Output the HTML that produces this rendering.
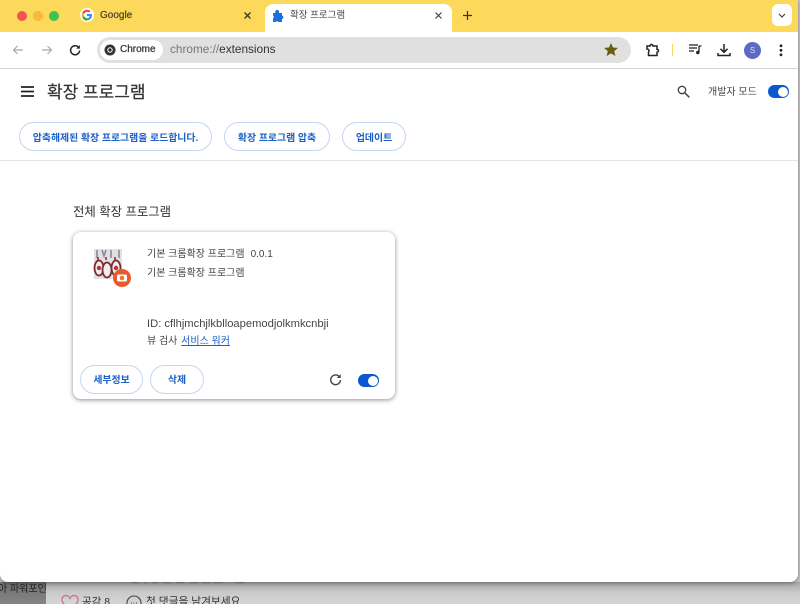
<!DOCTYPE html>
<html lang="ko">
<head>
<meta charset="utf-8">
<style>
*{box-sizing:border-box}
html,body{margin:0;padding:0;width:800px;height:604px;overflow:hidden;background:#c9c9c9;font-family:"Liberation Sans","Noto Sans CJK KR",sans-serif;color:#333}
.abs,.t{position:absolute}
.t{white-space:nowrap;line-height:1}
.wrap{position:absolute;left:0;top:0;width:800px;height:604px;overflow:hidden;filter:blur(.3px)}
.bg{position:absolute;left:0;top:582px;width:800px;height:22px;background:linear-gradient(#a5a5a5,#cbcbcb 50%,#d6d6d6)}
.bgl{position:absolute;left:0;top:582px;width:46px;height:22px;background:linear-gradient(#6f6f6f,#858585)}
.win{position:absolute;left:0;top:0;width:798px;height:582px;background:#fff;border-radius:0 0 8px 8px;overflow:hidden;box-shadow:0 1px 5px rgba(0,0,0,.4)}
.top{position:absolute;left:0;top:0;width:100%;height:32px;background:#fdd95b}
.tab{position:absolute;left:265px;top:4px;width:187px;height:28px;background:#fff;border-radius:8px 8px 0 0}
.bar{position:absolute;left:0;top:32px;width:100%;height:37px;background:#fff;border-bottom:1px solid #d4d4d4}
.omni{position:absolute;left:97px;top:37px;width:534px;height:26px;border-radius:13px;background:#e0e0e0}
.chip{position:absolute;left:100px;top:40px;width:63px;height:20px;border-radius:10px;background:#fff}
.btn{position:absolute;height:29px;border:1px solid #c6d5f2;border-radius:15px;background:#fff;color:#1a5fc8;font-size:9.900px;font-weight:bold;line-height:31px;text-align:center;white-space:nowrap}
.hr{position:absolute;left:0;top:160px;width:100%;height:1px;background:#e4e4e4}
.card{position:absolute;left:73px;top:232px;width:322px;height:167px;background:#fff;border-radius:8px;box-shadow:0 1px 5px rgba(0,0,0,.45)}
.tg{position:absolute;width:21px;height:13px;border-radius:7px;background:#0b57d0}
.tg i{position:absolute;right:1.500px;top:1.500px;width:10px;height:10px;border-radius:50%;background:#fff}
svg{position:absolute;overflow:visible}
</style>
</head>
<body>
<div class="wrap">
<div class="bg"></div><div class="bgl"></div>
<div class="t" style="left:-2px;top:585px;font-size:10px;color:#222">아 파워포인</div>
<div class="t" style="left:82px;top:597px;font-size:10.500px;color:#333">공감 8</div>
<div class="t" style="left:146px;top:597px;font-size:10.700px;color:#333">첫 댓글을 남겨보세요</div>
<svg style="left:61px;top:595px" width="18" height="14" viewBox="0 0 18 14"><path d="M9 14C4 10 1 8 1 5a4 4 0 0 1 8-1 4 4 0 0 1 8 1c0 3-3 5-8 9z" fill="none" stroke="#cf6b7d" stroke-width="1.200"/></svg>
<svg style="left:126px;top:595px" width="16" height="14" viewBox="0 0 16 14"><circle cx="8" cy="8" r="7" fill="none" stroke="#444" stroke-width="1.100"/><path d="M5 8h1M7.500 8h1M10 8h1" stroke="#444"/></svg>
<svg style="left:130px;top:582px" width="114" height="3" viewBox="0 0 114 3"><path d="M2 .7h7M14 .7h3M22 .7h6M33 .7h8M46 .7h8M60 .7h8M72 .7h8M84 .7h9M105 .7h9" stroke="#6f8a72" stroke-width=".9"/></svg>

<div class="win">
 <div class="top"></div>
 <div class="abs" style="left:17px;top:11px;width:10px;height:10px;border-radius:50%;background:#f0564e"></div>
 <div class="abs" style="left:33px;top:11px;width:10px;height:10px;border-radius:50%;background:#f8b93a"></div>
 <div class="abs" style="left:49px;top:11px;width:10px;height:10px;border-radius:50%;background:#3fc24e"></div>

 <!-- Google tab -->
 <div class="abs" style="left:80px;top:8px;width:14px;height:14px;border-radius:50%;background:#fff"></div>
 <svg style="left:81px;top:9px" width="12" height="12" viewBox="0 0 24 24"><path d="M22 12.300c0-.8-.1-1.500-.2-2.200H12v4.200h5.600a4.800 4.800 0 0 1-2.100 3.100v2.600h3.300c2-1.800 3.200-4.500 3.200-7.700z" fill="#4285f4"/><path d="M12 22.500c2.800 0 5.200-.9 6.800-2.500l-3.300-2.600c-.9.600-2.100 1-3.500 1-2.700 0-5-1.800-5.800-4.300H2.800v2.700a10.500 10.500 0 0 0 9.200 6.700z" fill="#34a853"/><path d="M6.200 14.100a6.300 6.300 0 0 1 0-4.200V7.200H2.800a10.500 10.500 0 0 0 0 9.600z" fill="#fbbc05"/><path d="M12 5.600c1.500 0 2.900.5 4 1.500l3-3A10.500 10.500 0 0 0 2.800 7.200l3.400 2.700C7 7.400 9.300 5.600 12 5.600z" fill="#ea4335"/></svg>
 <div class="t" style="left:100px;top:11px;font-size:10px;color:#4a4020;-webkit-text-stroke:.2px #4a4020">Google</div>
 <svg style="left:243px;top:11px" width="9" height="9" viewBox="0 0 9 9"><path d="M1.500 1.500l6 6M7.500 1.500l-6 6" stroke="#3b3720" stroke-width="1.300"/></svg>

 <!-- Active tab -->
 <div class="tab"></div>
 <svg style="left:272px;top:9px" width="13" height="13" viewBox="0 0 13 13"><path d="M1 4h2.500a2 2 0 0 1 3.500-2V4h3v2.500a1.800 1.800 0 0 1 0 3.500V13H6.500a1.800 1.800 0 0 0-3 0H1V9.500a1.800 1.800 0 0 0 0-3z" fill="#1a6fdc"/></svg>
 <div class="t" style="left:290px;top:11px;font-size:9.500px;color:#444">확장 프로그램</div>
 <svg style="left:434px;top:11px" width="9" height="9" viewBox="0 0 9 9"><path d="M1.500 1.500l6 6M7.500 1.500l-6 6" stroke="#444" stroke-width="1.200"/></svg>
 <svg style="left:462px;top:10px" width="11" height="11" viewBox="0 0 11 11"><path d="M5.500 1v9M1 5.500h9" stroke="#3b3720" stroke-width="1.300"/></svg>
 <div class="abs" style="left:772px;top:4px;width:20px;height:22px;background:#fff;border-radius:6px"></div>
 <svg style="left:778px;top:13px" width="8" height="5" viewBox="0 0 8 5"><path d="M1 1l3 3 3-3" fill="none" stroke="#444" stroke-width="1.200"/></svg>

 <!-- Toolbar -->
 <div class="bar"></div>
 <svg style="left:12px;top:44px" width="12" height="12" viewBox="0 0 12 12"><path d="M11 6H1.500M5.500 2L1.500 6l4 4" fill="none" stroke="#a9a9a9" stroke-width="1.200"/></svg>
 <svg style="left:41px;top:44px" width="12" height="12" viewBox="0 0 12 12"><path d="M1 6h9.500M6.500 2l4 4-4 4" fill="none" stroke="#a9a9a9" stroke-width="1.200"/></svg>
 <svg style="left:69px;top:44px" width="12" height="12" viewBox="0 0 12 12"><path d="M10 4a4.500 4.500 0 1 0 .6 2.500" fill="none" stroke="#222" stroke-width="1.500"/><path d="M10.800 1v3.600H7.200z" fill="#222"/></svg>
 <div class="omni"></div>
 <div class="chip"></div>
 <svg style="left:104px;top:44px" width="12" height="12" viewBox="0 0 12 12"><circle cx="6" cy="6" r="5.500" fill="#333"/><circle cx="6" cy="6" r="2.700" fill="#fff"/><circle cx="6" cy="6" r="1.700" fill="#333"/></svg>
 <div class="t" style="left:120px;top:44.500px;font-size:10px;color:#333;-webkit-text-stroke:.25px #333">Chrome</div>
 <div class="t" style="left:170px;top:44px;font-size:11.800px;color:#777">chrome://<span style="color:#333">extensions</span></div>
 <svg style="left:604px;top:43px" width="14" height="13" viewBox="0 0 14 13"><path d="M7 0l2 4.500 5 .4-3.800 3.200 1.200 4.900L7 10.400 2.600 13l1.200-4.900L0 4.900l5-.4z" fill="#695c10"/></svg>
 <svg style="left:645px;top:42px" width="15" height="15" viewBox="0 0 15 15"><path d="M2 4h3a1.500 1.500 0 0 1 3 0h4v3.200a1.500 1.500 0 0 1 0 3V13.500H3.500V10a1.800 1.800 0 0 0-1.500-3z" fill="none" stroke="#222" stroke-width="1.500"/></svg>
 <div class="abs" style="left:672px;top:44px;width:1px;height:12px;background:#fbd65c"></div>
 <svg style="left:689px;top:44px" width="13" height="11" viewBox="0 0 13 11"><path d="M0 1h9M0 4h8M0 7h5" stroke="#222" stroke-width="1.300"/><path d="M10 2v6.500" stroke="#222" stroke-width="1.300"/><circle cx="8.800" cy="8.500" r="1.700" fill="#222"/><path d="M10 2h2.500" stroke="#222" stroke-width="1.300"/></svg>
 <svg style="left:717px;top:43px" width="14" height="14" viewBox="0 0 14 14"><path d="M7 1v8M3.500 5.800L7 9.300l3.500-3.500M1 10v2.500h12V10" fill="none" stroke="#222" stroke-width="1.500"/></svg>
 <div class="abs" style="left:744px;top:42px;width:17px;height:17px;border-radius:50%;background:#5b6bc4;color:#d8dcf5;font-size:8px;line-height:17px;text-align:center">S</div>
 <svg style="left:779px;top:44px" width="4" height="13" viewBox="0 0 4 13"><circle cx="2" cy="1.800" r="1.400" fill="#222"/><circle cx="2" cy="6.300" r="1.400" fill="#222"/><circle cx="2" cy="10.800" r="1.400" fill="#222"/></svg>

 <!-- Header -->
 <svg style="left:21px;top:86px" width="13" height="11" viewBox="0 0 13 11"><path d="M0 1h13M0 5.500h13M0 10h13" stroke="#222" stroke-width="1.700"/></svg>
 <div class="t" style="left:47px;top:84px;font-size:17px;color:#333;-webkit-text-stroke:.2px #333">확장 프로그램</div>
 <svg style="left:677px;top:85px" width="13" height="13" viewBox="0 0 13 13"><circle cx="5" cy="5" r="3.700" fill="none" stroke="#444" stroke-width="1.300"/><path d="M8 8l4.300 4.300" stroke="#444" stroke-width="1.500"/></svg>
 <div class="t" style="left:708px;top:88px;font-size:10px;color:#444">개발자 모드</div>
 <div class="tg" style="left:768px;top:85px"><i></i></div>

 <div class="btn" style="left:19px;top:122px;width:193px">압축해제된 확장 프로그램을 로드합니다.</div>
 <div class="btn" style="left:224px;top:122px;width:106px">확장 프로그램 압축</div>
 <div class="btn" style="left:342px;top:122px;width:64px">업데이트</div>
 <div class="hr"></div>

 <div class="t" style="left:73px;top:206px;font-size:12.400px;color:#333">전체 확장 프로그램</div>

 <!-- Card -->
 <div class="card"></div>
 <svg style="left:94px;top:249px" width="40" height="40" viewBox="0 0 40 40">
  <rect x="0" y="0" width="28" height="30" fill="#e4dfe2"/>
  <path d="M3 1v8M8 1l2 6 2-6M17 1v8M25 1v8" stroke="#8a8a96" stroke-width="1.600" fill="none"/>
  <path d="M4 8v3M12 8v3M21 8v3" stroke="#7a2a2e" stroke-width="1.500"/>
  <ellipse cx="5" cy="19" rx="4.500" ry="7.500" fill="#eee" stroke="#7e2a2e" stroke-width="1.800"/>
  <ellipse cx="13" cy="21" rx="4.500" ry="7.500" fill="#eee" stroke="#7e2a2e" stroke-width="1.800"/>
  <ellipse cx="22" cy="19" rx="4.500" ry="7.500" fill="#eee" stroke="#7e2a2e" stroke-width="1.800"/>
  <circle cx="5" cy="19" r="2.200" fill="#b0353a"/><circle cx="22" cy="19" r="2.200" fill="#b0353a"/>
  <circle cx="28" cy="29" r="9" fill="#e9592c"/>
  <rect x="23" y="25.500" width="10" height="7" rx="1.500" fill="#fff"/>
  <circle cx="28" cy="29" r="2.300" fill="#e9792c"/>
 </svg>
 <div class="t" style="left:147px;top:250px;font-size:10px;color:#444">기본 크롬확장 프로그램<span style="margin-left:6px">0.0.1</span></div>
 <div class="t" style="left:147px;top:269px;font-size:10px;color:#444">기본 크롬확장 프로그램</div>
 <div class="t" style="left:147px;top:319px;font-size:11.200px;color:#444">ID: cflhjmchjlkblloapemodjolkmkcnbji</div>
 <div class="t" style="left:147px;top:337px;font-size:10px;color:#444">뷰 검사 <span style="color:#1a5fc8;text-decoration:underline;margin-left:1px">서비스 워커</span></div>
 <div class="btn" style="left:80px;top:365px;width:63px;line-height:29px">세부정보</div>
 <div class="btn" style="left:150px;top:365px;width:54px;line-height:29px">삭제</div>
 <svg style="left:329px;top:373px" width="13" height="13" viewBox="0 0 12 12"><path d="M10 4a4.500 4.500 0 1 0 .6 2.500" fill="none" stroke="#444" stroke-width="1.300"/><path d="M10.800 1v3.600H7.200z" fill="#444"/></svg>
 <div class="tg" style="left:358px;top:374px"><i></i></div>
</div>
</div>
</body>
</html>
